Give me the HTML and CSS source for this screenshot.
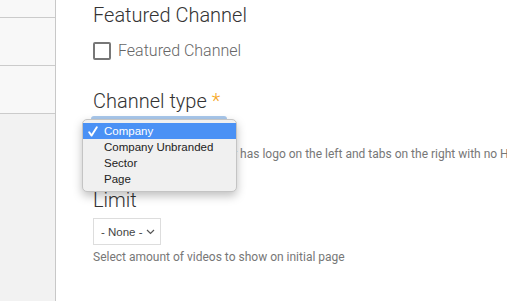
FILE: index.html
```html
<!DOCTYPE html>
<html lang="en">

<head>
  <meta charset="UTF-8">
  <title>Channel settings</title>
  <link rel="stylesheet" href="styles.css">
</head>

<body>
  <div class="page">
    <aside class="sidebar">
      <div class="side-item side-first"></div>
      <div class="side-item"></div>
      <div class="side-item"></div>
      <div class="side-rest"></div>
    </aside>

    <main class="content">
      <div class="field">
        <h2 class="field-title">Featured Channel</h2>
        <label class="check"><span class="check-box"></span>Featured Channel</label>
      </div>

      <div class="field field-type">
        <h2 class="field-title">Channel type <span class="req">*</span></h2>
        <div class="select-open">
          <ul class="popup">
            <li class="selected"><svg class="tick" width="10" height="11" viewBox="0 0 10 11"><path d="M1.2 6.2L3.6 9.6L8.8 1.2" fill="none" stroke="#fff" stroke-width="1.9" stroke-linecap="round" stroke-linejoin="round"/></svg>Company</li>
            <li>Company Unbranded</li>
            <li>Sector</li>
            <li>Page</li>
          </ul>
        </div>
        <p class="help">Choose Company if header has logo on the left and tabs on the right with no HTML</p>
      </div>

      <div class="field field-limit">
        <h2 class="field-title">Limit</h2>
        <div class="select">- None - <svg class="chev" width="9" height="6" viewBox="0 0 9 6"><path d="M1 1l3.5 3.5L8 1" fill="none" stroke="#555" stroke-width="1.2"/></svg></div>
        <p class="help">Select amount of videos to show on initial page</p>
      </div>
    </main>
  </div>
</body>

</html>
```

FILE: styles.css
```css
html,
body {
  margin: 0;
  height: 301px;
  overflow: hidden;
  background: #fff;
  font-family: Roboto, 'Liberation Sans', sans-serif;
}

.page {
  display: flex;
  height: 100%;
}

.sidebar {
  width: 55px;
  border-right: 1px solid #c8c8c8;
  display: flex;
  flex-direction: column;
}

.side-item {
  height: 47px;
  background: #f8f8f8;
  border-bottom: 1px solid #cbcbcb;
}

.side-item.side-first {
  height: 17px;
}

.side-rest {
  flex: 1;
  background: #f2f2f2;
}

.content {
  flex: 1;
  padding: 2px 0 0 37px;
  white-space: nowrap;
  overflow: hidden;
}

.field-title {
  margin: 0;
  font-size: 20px;
  font-weight: 300;
  line-height: 26px;
  color: #333;
}

.req {
  color: #f5a623;
}

.check {
  display: flex;
  align-items: center;
  margin-top: 13px;
  font-size: 16px;
  font-weight: 300;
  color: #666;
}

.check-box {
  width: 14px;
  height: 14px;
  border: 2px solid #777;
  border-radius: 2px;
  margin-right: 7px;
}

.field-type {
  margin-top: 28px;
}

.select-open {
  position: relative;
  width: 136px;
  height: 24px;
  margin: 2px 0 0 -2px;
  border-top: 4px solid #a9c8ec;
  border-radius: 3px 3px 0 0;
}

.popup {
  position: absolute;
  top: -1px;
  left: -9px;
  width: 153px;
  margin: 0;
  padding: 3px 0 4px;
  list-style: none;
  background: #f0f0f0;
  border: 1px solid #c4c4c4;
  border-radius: 5px;
  box-shadow: 0 4px 10px rgba(0, 0, 0, 0.25);
  z-index: 2;
  font-family: 'Liberation Sans', Arial, sans-serif;
  font-size: 11.5px;
  color: #222;
}

.popup li {
  height: 16px;
  line-height: 16px;
  padding-left: 21px;
  position: relative;
}

.popup li.selected {
  background: #4a91f5;
  color: #fff;
}

.tick {
  position: absolute;
  left: 5px;
  top: 3px;
}

.help {
  margin: 3px 0 0;
  font-size: 12px;
  color: #777;
}

.field-limit {
  margin-top: 26px;
}

.select {
  display: inline-flex;
  align-items: center;
  gap: 3px;
  height: 25px;
  margin-top: 5px;
  padding: 0 5px 0 7px;
  border: 1px solid #ddd;
  font-family: 'Liberation Sans', Arial, sans-serif;
  font-size: 11.5px;
  color: #444;
}

.select .chev {
  margin-top: 1px;
}

.field-limit .help {
  margin-top: 5px;
}
```
